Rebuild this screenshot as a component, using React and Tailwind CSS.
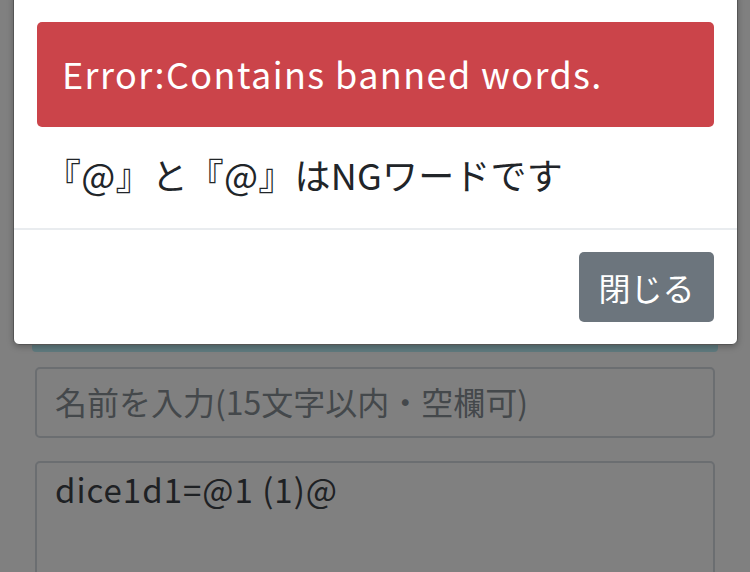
import React from 'react'

const jp = { fontFamily: '"Noto Sans CJK JP", "Noto Sans", sans-serif' }

export default function App() {
  return (
    <div
      className="relative w-[750px] h-[572px] overflow-hidden bg-[#808080]"
      style={jp}
    >
      {/* page behind the overlay */}
      <div className="px-[35px]">
        <div className="h-[352px] -mx-[3px] flex flex-col justify-end">
          <div className="h-[14px] bg-[#5f7a7e] rounded-b-[4px]" />
        </div>
        <div className="mt-[15px] h-[71px] border-2 border-[#6b6e71] rounded-[5px] flex items-center px-[18px] pb-[4px] text-[32px] text-[#44484b]">
          名前を入力(15文字以内・空欄可)
        </div>
        <div className="mt-[23px] h-[150px] border-2 border-[#6b6e71] rounded-[5px] px-[18px] pt-[2px] text-[33px] tracking-[1px] text-[#1e2124]">
          dice1d1=@1 (1)@
        </div>
      </div>

      {/* modal */}
      <div className="absolute left-[13px] top-[-10px] w-[725px] bg-white border border-[#555] rounded-[6px] shadow-[0_2px_6px_rgba(0,0,0,0.25)]">
        <div className="px-[23px] pt-[31px] pb-[24px] border-b-2 border-[#e9ecef]">
          <div className="bg-[#cb444a] rounded-[5px] h-[105px] flex items-center px-[25px] pb-[4px] text-white text-[36px] tracking-[1.4px]">
            Error:Contains banned words.
          </div>
          <div className="mt-[20px] mb-[3px] pl-[8px] leading-[54px] text-[36px] tracking-[0.2px] text-[#212529]">
            『@』と『@』はNGワードです
          </div>
        </div>
        <div className="flex justify-end px-[23px] pt-[22px] pb-[22px]">
          <button className="w-[135px] h-[70px] bg-[#6c757d] rounded-[5px] text-white text-[32px]">
            閉じる
          </button>
        </div>
      </div>
    </div>
  )
}
